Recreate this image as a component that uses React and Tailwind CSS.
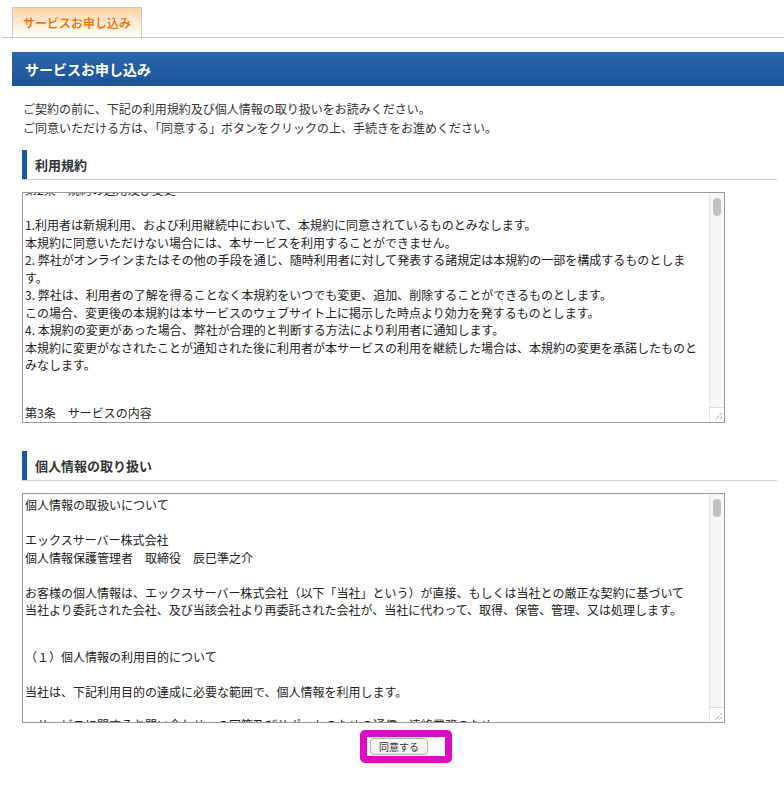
const FONT = { fontFamily: '"Noto Sans CJK JP", "Noto Sans", sans-serif' };

// [text, line height]
const TERMS = [
  ['第2条　規約の適用及び変更', 17.5],
  ['', 17.5],
  ['1.利用者は新規利用、および利用継続中において、本規約に同意されているものとみなします。', 17.5],
  ['本規約に同意いただけない場合には、本サービスを利用することができません。', 17.5],
  ['2. 弊社がオンラインまたはその他の手段を通じ、随時利用者に対して発表する諸規定は本規約の一部を構成するものとしま', 17.5],
  ['す。', 17.5],
  ['3. 弊社は、利用者の了解を得ることなく本規約をいつでも変更、追加、削除することができるものとします。', 17.5],
  ['この場合、変更後の本規約は本サービスのウェブサイト上に掲示した時点より効力を発するものとします。', 17.5],
  ['4. 本規約の変更があった場合、弊社が合理的と判断する方法により利用者に通知します。', 17.5],
  ['本規約に変更がなされたことが通知された後に利用者が本サービスの利用を継続した場合は、本規約の変更を承諾したものと', 17.5],
  ['みなします。', 17.5],
  ['', 17.5],
  ['', 13],
  ['第3条　サービスの内容', 17.5],
  ['', 17.5],
];

const PRIVACY = [
  ['個人情報の取扱いについて', 17.5],
  ['', 17.5],
  ['エックスサーバー株式会社', 17.5],
  ['個人情報保護管理者　取締役　辰巳準之介', 17.5],
  ['', 17.5],
  ['お客様の個人情報は、エックスサーバー株式会社（以下「当社」という）が直接、もしくは当社との厳正な契約に基づいて', 17.5],
  ['当社より委託された会社、及び当該会社より再委託された会社が、当社に代わって、取得、保管、管理、又は処理します。', 17.5],
  ['', 17.5],
  ['', 12],
  ['（１）個人情報の利用目的について', 17.5],
  ['', 17.5],
  ['当社は、下記利用目的の達成に必要な範囲で、個人情報を利用します。', 17.5],
  ['', 15],
  ['・サービスに関するお問い合わせへの回答及びサポートのための通信・連絡業務のため', 17.5],
  ['', 17.5],
];

function Heading({ children }) {
  return (
    <div className="flex h-[30px] border-b border-[#cccccc]">
      <div className="w-[5px] bg-[#1b56a0]" />
      <div className="flex items-center pl-[8px] text-[13px] font-bold text-[#333333]">{children}</div>
    </div>
  );
}

function FakeTextarea({ lines, offset, height }) {
  return (
    <div className={`flex w-[703px] border border-[#9a9a9a] bg-white ${height}`}>
      <div className="flex-1 overflow-hidden px-[2px] pt-[2px]">
        <div className={`text-[12px] text-[#222222] ${offset}`}>
          {lines.map(([l, h], i) => (
            <div key={i} className="whitespace-pre" style={{ height: h, lineHeight: '17.5px' }}>
              {l}
            </div>
          ))}
        </div>
      </div>
      <div className="flex w-[15px] flex-col border-l border-[#e4e4e4] bg-[#f7f7f7]">
        <div className="flex-1 pt-[5px]">
          <div className="mx-auto h-[18px] w-[8px] rounded-full bg-[#c1c1c1]" />
        </div>
        <div className="relative h-[15px] border-t border-[#dcdcdc] bg-white">
          <svg width="14" height="14" viewBox="0 0 14 14" className="absolute left-0 top-0">
            <path d="M12 5 L5 12 M12 9 L9 12" stroke="#777" strokeWidth="1" strokeDasharray="1 1" />
          </svg>
        </div>
      </div>
    </div>
  );
}

export default function App() {
  return (
    <div className="min-h-[790px] w-[784px] bg-white text-[#333333]" style={FONT}>
      {/* tab strip */}
      <div className="ml-[2px] flex border-b border-[#c8c8c8] pl-[10px] pt-[7px]">
        <div className="flex h-[30px] w-[130px] items-center justify-center border border-b-0 border-[#c8c8c8] bg-gradient-to-b from-[#ffd3a3] to-white">
          <span
            className="text-[12px] font-bold text-[#ff7400]"
            style={{ textShadow: '0 0 2px #fff, 0 0 2px #fff' }}
          >
            サービスお申し込み
          </span>
        </div>
      </div>

      <div className="ml-[12px] mt-[14px]">
        <div className="flex h-[34px] items-center bg-gradient-to-b from-[#2c67ab] to-[#1b5398] pl-[13px] text-[14px] font-bold text-white">
          サービスお申し込み
        </div>

        <div className="pl-[10px] pr-[7px]">
          <p className="mt-[13px] pl-[1px] text-[12px] leading-[19px] text-[#333333]">
            ご契約の前に、下記の利用規約及び個人情報の取り扱いをお読みください。
            <br />
            ご同意いただける方は、「同意する」ボタンをクリックの上、手続きをお進めください。
          </p>

          <div className="mt-[13px]">
            <Heading>利用規約</Heading>
          </div>
          <div className="mt-[12px]">
            <FakeTextarea lines={TERMS} offset="-mt-[14px]" height="h-[231px]" />
          </div>

          <div className="mt-[28px]">
            <Heading>個人情報の取り扱い</Heading>
          </div>
          <div className="mt-[12px]">
            <FakeTextarea lines={PRIVACY} offset="mt-0" height="h-[230px]" />
          </div>

          <div className="mt-[7px] flex pl-[338px]">
            <div className="flex h-[33px] w-[92px] items-start rounded-[5px] border-[7px] border-[#e10ac4] bg-white pl-[3px] pt-[1px]">
              <button className="flex h-[17px] w-[58px] items-center justify-center rounded-[4px] border border-[#b4b4b4] bg-gradient-to-b from-white to-[#ececec] text-[10px] leading-none text-[#333333]">
                同意する
              </button>
            </div>
          </div>
        </div>
      </div>
    </div>
  );
}
